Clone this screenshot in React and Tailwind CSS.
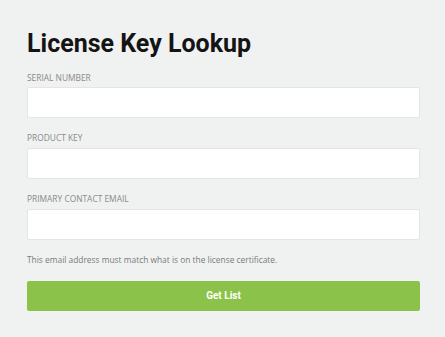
import React from "react";

export default function App() {
  const label = "block text-[8.4px] leading-[8px] uppercase text-[#8a8a8a] font-['Open_Sans',sans-serif]";
  const input = "block w-full h-[31px] bg-white border border-[#e4e6e6] rounded-[2px]";
  return (
    <div className="w-[445px] h-[337px] bg-[#f0f1f1] pt-[31px] pl-[27px] pr-[25px]">
      <h1 className="text-[25px] leading-[25px] font-bold text-[#141414] font-['Roboto',sans-serif]">
        License Key Lookup
      </h1>
      <div className={label + " mt-[17.5px]"}>Serial Number</div>
      <div className={input + " mt-[5px]"} />
      <div className={label + " mt-[16px]"}>Product Key</div>
      <div className={input + " mt-[6px]"} />
      <div className={label + " mt-[16.5px]"}>Primary Contact Email</div>
      <div className={input + " mt-[5.5px]"} />
      <p className="mt-[16px] text-[8.4px] leading-[8px] text-[#7a7a7a] font-['Open_Sans',sans-serif]">
        This email address must match what is on the license certificate.
      </p>
      <button className="mt-[17px] w-full h-[30px] bg-[#8bc34a] rounded-[2px] text-white text-[10px] font-bold font-['Roboto',sans-serif] flex items-center justify-center">
        Get List
      </button>
    </div>
  );
}
